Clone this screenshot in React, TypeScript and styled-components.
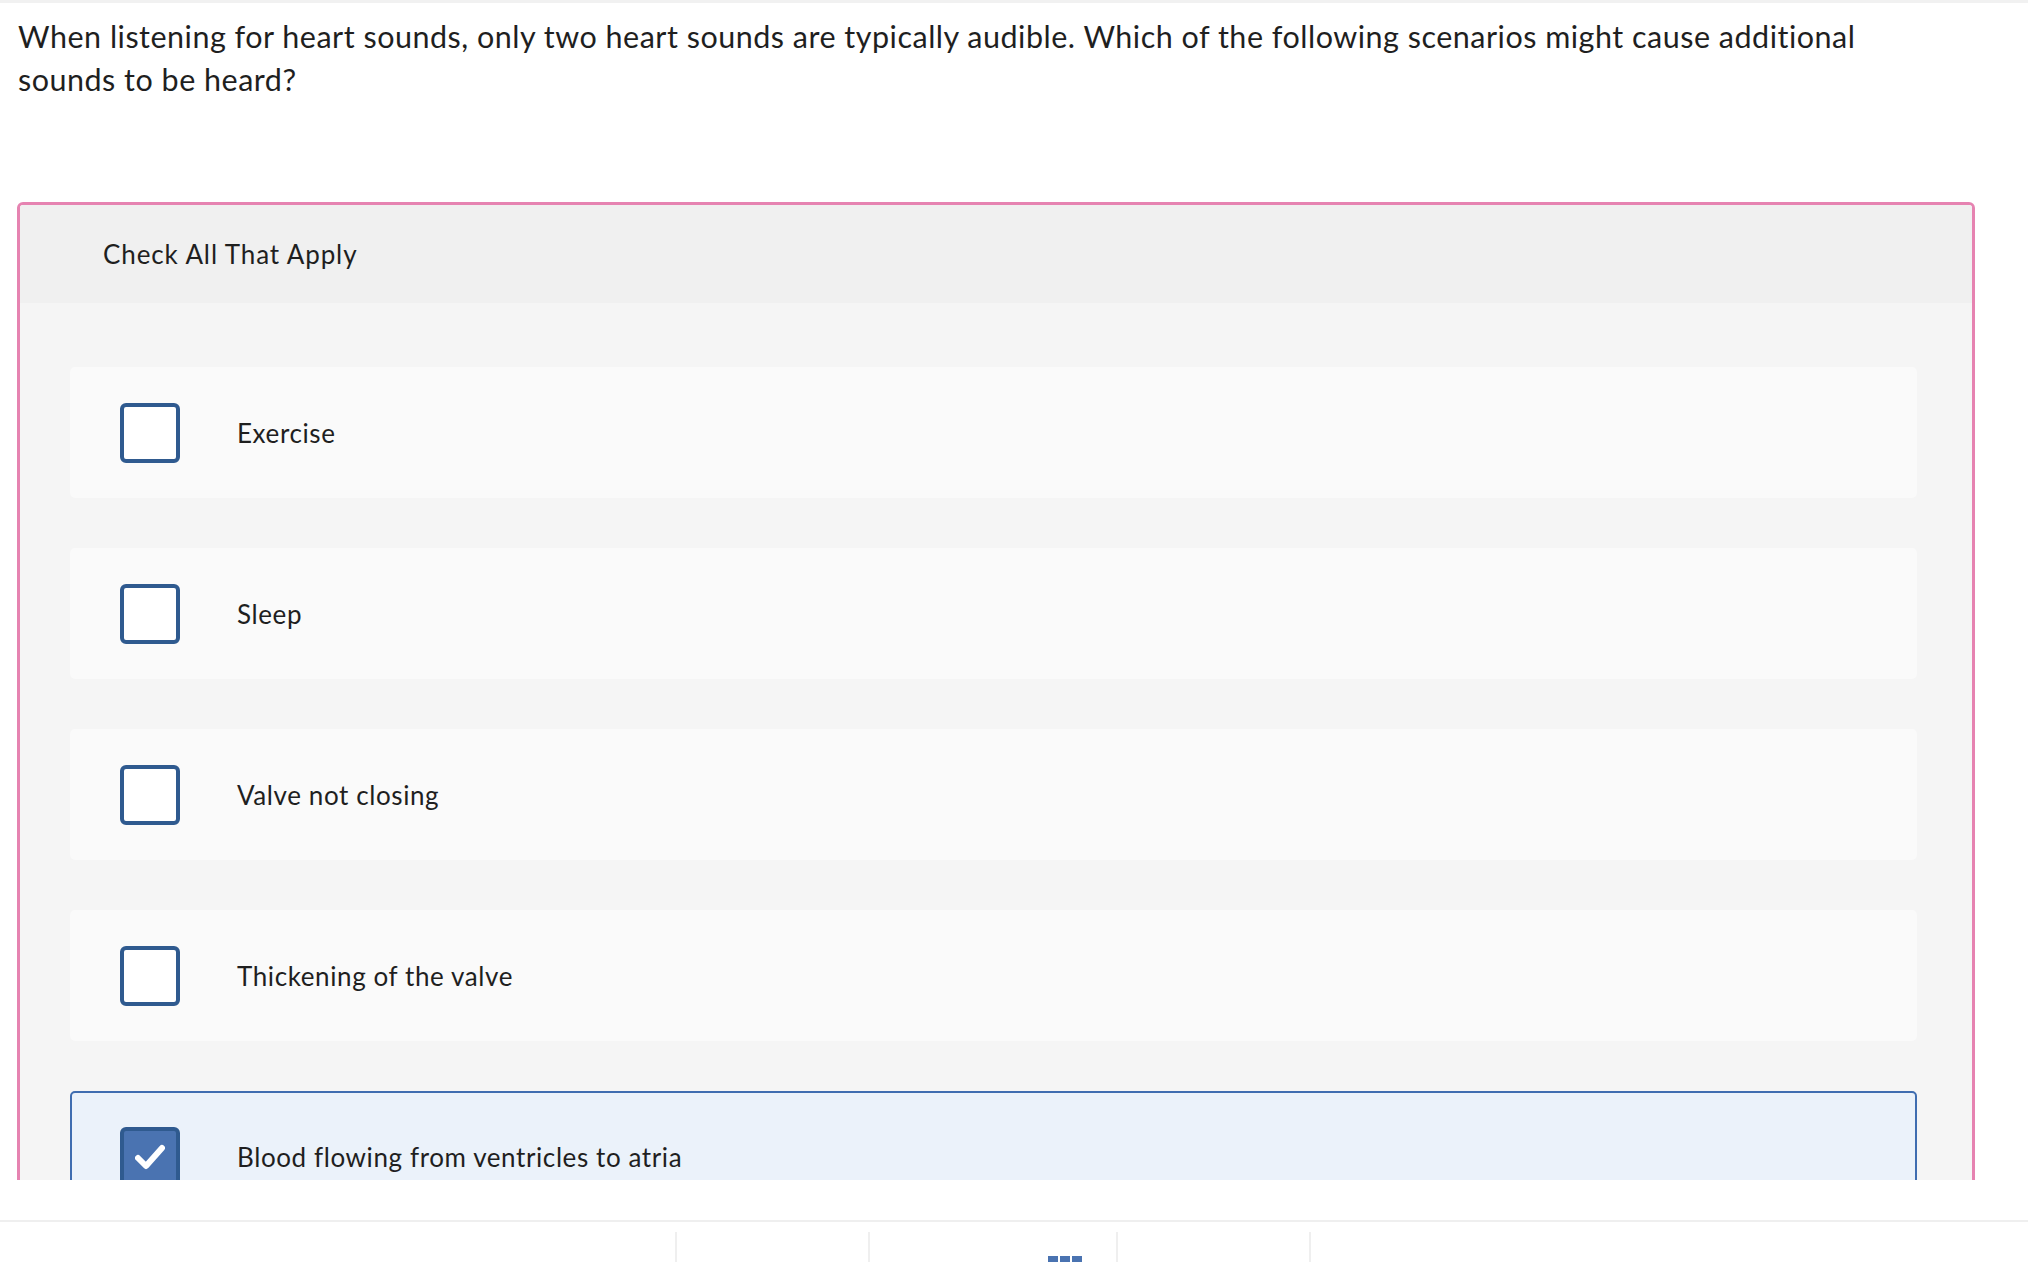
import styled, { createGlobalStyle } from 'styled-components';

const GlobalStyle = createGlobalStyle`
  html, body {
    margin: 0;
    padding: 0;
    background: #ffffff;
  }
  body {
    font-family: Lato, "Open Sans", Arial, sans-serif;
    color: #1f1f1f;
  }
`;

const Page = styled.div`
  display: flex;
  flex-direction: column;
  width: 2028px;
  height: 1262px;
  overflow: hidden;
  border-top: 3px solid #f1f1f1;
  box-sizing: border-box;
`;

const Viewport = styled.div`
  height: 1177px;
  overflow: hidden;
  flex-shrink: 0;
`;

const Question = styled.p`
  margin: 0;
  padding: 12px 100px 0 18px;
  font-size: 30.5px;
  letter-spacing: 0.5px;
  line-height: 43px;
  color: #1f1f1f;
`;

const Card = styled.section`
  margin: 101px 0 0 17px;
  width: 1958px;
  border: 3px solid #e683b1;
  border-radius: 6px;
  box-sizing: border-box;
  overflow: hidden;
`;

const Header = styled.div`
  display: flex;
  align-items: center;
  height: 98px;
  padding-left: 83px;
  background: #f0f0f0;
  font-size: 26px;
  letter-spacing: 0.9px;
  color: #1f1f1f;
`;

const Body = styled.div`
  display: flex;
  flex-direction: column;
  gap: 50px;
  padding: 64px 55px 80px 50px;
  background: #f5f5f5;
`;

const Option = styled.label<{ selected?: boolean }>`
  display: flex;
  align-items: center;
  gap: 57px;
  height: 131px;
  padding-left: ${({ selected }) => (selected ? '48px' : '50px')};
  box-sizing: border-box;
  border-radius: 5px;
  background: ${({ selected }) => (selected ? '#ebf2fa' : '#fafafa')};
  border: ${({ selected }) => (selected ? '2px solid #3f6db0' : 'none')};
  font-size: 26px;
  letter-spacing: 0.6px;
  color: #1f1f1f;
  cursor: pointer;
`;

const Box = styled.span<{ checked?: boolean }>`
  display: flex;
  align-items: center;
  justify-content: center;
  width: 60px;
  height: 60px;
  box-sizing: border-box;
  border: 4px solid #2f5a8f;
  border-radius: 6px;
  background: ${({ checked }) => (checked ? '#4a73b1' : '#ffffff')};
  flex-shrink: 0;
`;

const Spacer = styled.div`
  height: 40px;
  flex-shrink: 0;
`;

const Footer = styled.footer`
  display: flex;
  flex: 1;
  border-top: 2px solid #efefef;
  padding-top: 10px;
`;

const Cell = styled.div<{ w: number; divided?: boolean }>`
  display: flex;
  justify-content: flex-end;
  align-items: flex-end;
  width: ${({ w }) => w}px;
  flex-shrink: 0;
  border-left: ${({ divided }) => (divided ? '2px solid #efefef' : 'none')};
  box-sizing: border-box;
`;

const MenuIcon = styled.svg`
  margin-right: 32px;
  margin-bottom: -6px;
`;

const options = [
  { text: 'Exercise', checked: false },
  { text: 'Sleep', checked: false },
  { text: 'Valve not closing', checked: false },
  { text: 'Thickening of the valve', checked: false },
  { text: 'Blood flowing from ventricles to atria', checked: true },
];

export default function App() {
  return (
    <>
      <GlobalStyle />
      <Page>
        <Viewport>
          <Question>
            When listening for heart sounds, only two heart sounds are typically audible. Which of the
            following scenarios might cause additional sounds to be heard?
          </Question>
          <Card>
            <Header>Check All That Apply</Header>
            <Body>
              {options.map((o) => (
                <Option key={o.text} selected={o.checked}>
                  <Box checked={o.checked}>
                    {o.checked && (
                      <svg width="30" height="26" viewBox="0 0 30 26">
                        <path
                          d="M3 14 L11 22 L27 4"
                          fill="none"
                          stroke="#ffffff"
                          strokeWidth="6"
                          strokeLinecap="round"
                          strokeLinejoin="round"
                        />
                      </svg>
                    )}
                  </Box>
                  <span>{o.text}</span>
                </Option>
              ))}
            </Body>
          </Card>
        </Viewport>
        <Spacer />
        <Footer>
          <Cell w={675} />
          <Cell w={193} divided />
          <Cell w={248} divided>
            <MenuIcon width="36" height="12" viewBox="0 0 36 12">
              <rect x="0" y="0" width="10" height="12" fill="#4a73b1" />
              <rect x="12" y="0" width="10" height="12" fill="#4a73b1" />
              <rect x="24" y="0" width="10" height="12" fill="#4a73b1" />
            </MenuIcon>
          </Cell>
          <Cell w={193} divided />
          <Cell w={719} divided />
        </Footer>
      </Page>
    </>
  );
}
